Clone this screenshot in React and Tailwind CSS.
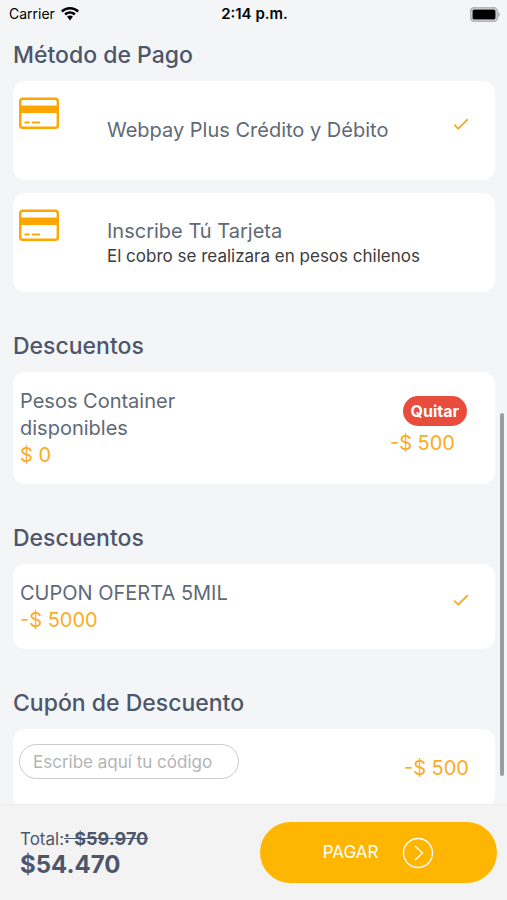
import { useState } from "react";

const paymentMethods = [
  { id: "webpay", title: "Webpay Plus Crédito y Débito" },
  {
    id: "card",
    title: "Inscribe Tú Tarjeta",
    detail: "El cobro se realizara en pesos chilenos",
  },
];

const WifiIcon = () => (
  <svg viewBox="0 0 18 14" className="h-[14px] w-[18px]" fill="black">
    <path d="M9 0C5.500 0 2.400 1.300 0 3.600L1.700 5.400C3.700 3.600 6.200 2.500 9 2.500s5.300 1.100 7.300 2.900L18 3.600C15.600 1.300 12.500 0 9 0z" />
    <path d="M9 4.300c-2.200 0-4.200.9-5.700 2.300L5 8.400c1.100-1 2.500-1.600 4-1.600s2.900.6 4 1.600l1.700-1.800C13.200 5.200 11.200 4.300 9 4.300z" />
    <path d="M9 8.500c-1.100 0-2.100.4-2.900 1.100L9 13.500l2.900-3.900C11.100 8.900 10.100 8.500 9 8.500z" />
  </svg>
);

const BatteryIcon = () => (
  <svg viewBox="0 0 30 15" className="h-[15px] w-[30px]">
    <rect x="0.750" y="0.750" width="26.500" height="13.500" rx="3.500" fill="none" stroke="#b4b5b7" strokeWidth="1.800" />
    <rect x="2.500" y="2.500" width="23" height="10" rx="1.500" fill="black" />
    <path d="M28.200 5v5c1-.3 1.700-1.300 1.700-2.500S29.200 5.300 28.200 5z" fill="#b4b5b7" />
  </svg>
);

const CardIcon = () => (
  <svg viewBox="0 0 40 32" className="h-8 w-10">
    <rect x="1.200" y="1.700" width="37.600" height="29" rx="2.500" fill="none" stroke="#ffa500" strokeWidth="2.400" />
    <rect x="1" y="8.500" width="38" height="7.500" fill="#ffa500" />
    <path d="M5.500 25.500h5M13 25.500h8" stroke="#ffa500" strokeWidth="2.200" />
  </svg>
);

const CheckIcon = () => (
  <svg viewBox="0 0 16 12" className="mb-3.5 h-3 w-4 shrink-0" fill="none">
    <path d="M1.200 6.600l4 4L14.800 1.200" stroke="#fbac1f" strokeWidth="1.900" />
  </svg>
);

const ArrowIcon = () => (
  <svg viewBox="0 0 32 32" className="h-8 w-8" fill="none" stroke="white" strokeWidth="1.300">
    <circle cx="16" cy="16" r="14.500" />
    <path d="M13 9l7.500 7L13 23" />
  </svg>
);

const Heading = ({ children }) => (
  <h2 className="mb-[10px] text-[23px] leading-8 font-medium">{children}</h2>
);

const App = () => {
  const [method, setMethod] = useState("webpay");
  const [code, setCode] = useState("");

  return (
    <div className="flex h-screen flex-col overflow-hidden bg-[#f3f5f7] font-[Inter,sans-serif] text-[#4e566b]">
      <header className="grid h-7 shrink-0 grid-cols-3 items-center pr-[7px] pl-[9px] text-sm text-black">
        <div className="flex items-center gap-[6px]">
          <span>Carrier</span>
          <WifiIcon />
        </div>
        <span className="text-center text-[15px] font-semibold">2:14 p.m.</span>
        <div className="flex justify-end">
          <BatteryIcon />
        </div>
      </header>

      <div className="relative flex min-h-0 flex-1 flex-col">
        <main className="flex flex-1 flex-col gap-[38px] overflow-y-auto pt-[11px] pr-3 pb-6 pl-[13px] [scrollbar-width:none]">
          <section>
            <Heading>Método de Pago</Heading>
            <div className="flex flex-col gap-[13px]">
              {paymentMethods.map((item) => (
                <label
                  key={item.id}
                  className="relative flex min-h-[99px] cursor-pointer items-center rounded-xl bg-white pr-[26px] pl-[6px]"
                >
                  <input
                    type="radio"
                    name="method"
                    value={item.id}
                    checked={method === item.id}
                    onChange={() => setMethod(item.id)}
                    className="sr-only"
                  />
                  <span className="mr-12 self-start pt-4">
                    <CardIcon />
                  </span>
                  <span className="flex flex-1 flex-col">
                    <span className="text-xl leading-[27px] text-[#606975]">{item.title}</span>
                    {item.detail && (
                      <span className="text-[17px] leading-[22px] text-[#3c3c3c]">{item.detail}</span>
                    )}
                  </span>
                  {method === item.id && <CheckIcon />}
                </label>
              ))}
            </div>
          </section>

          <section>
            <Heading>Descuentos</Heading>
            <div className="flex items-center justify-between rounded-xl bg-white pt-4 pr-7 pb-[15px] pl-[7px] text-xl leading-[27px] text-[#606975]">
              <div className="w-48">
                <p>Pesos Container disponibles</p>
                <p className="text-[#fbac1f]">$ 0</p>
              </div>
              <div className="mb-1 flex flex-col items-end gap-1">
                <button
                  type="button"
                  className="h-[30px] cursor-pointer rounded-full bg-[#e74c3c] px-2 text-base leading-6 font-bold text-white"
                >
                  Quitar
                </button>
                <p className="pr-3 text-[#fbac1f]">-$ 500</p>
              </div>
            </div>
          </section>

          <section>
            <Heading>Descuentos</Heading>
            <div className="flex items-center justify-between rounded-xl bg-white pt-4 pr-[26px] pb-[15px] pl-[7px] text-xl leading-[27px] text-[#606975]">
              <div>
                <p>CUPON OFERTA 5MIL</p>
                <p className="text-[#fbac1f]">-$ 5000</p>
              </div>
              <CheckIcon />
            </div>
          </section>

          <section>
            <Heading>Cupón de Descuento</Heading>
            <div className="flex min-h-[79px] items-center justify-between rounded-xl bg-white pr-[26px] pl-[6px]">
              <input
                type="text"
                aria-label="Código de descuento"
                value={code}
                onChange={(event) => setCode(event.target.value)}
                placeholder="Escribe aquí tu código"
                className="mb-3.5 h-[35px] w-[220px] rounded-full border border-[#cbcbcd] px-[13px] text-[17px] outline-none placeholder:text-[#b3b4b6]"
              />
              <p className="text-xl leading-[27px] text-[#fbac1f]">-$ 500</p>
            </div>
          </section>
        </main>
        {/* scroll indicator */}
        <div className="absolute right-[3px] bottom-7 h-[363px] w-1 rounded-full bg-[#9c9da0]" />
      </div>

      <footer className="flex h-24 shrink-0 items-center justify-between border-t border-[#ececec] bg-[#f4f3f4] pr-[10px] pl-5">
        <div>
          <p className="text-[17px] leading-6">
            Total:<s className="text-lg leading-6 font-bold">: $59.970</s>
          </p>
          <p className="text-2xl leading-7 font-bold">$54.470</p>
        </div>
        <button
          type="button"
          className="flex h-[61px] w-[237px] cursor-pointer items-center justify-center gap-6 rounded-full bg-[#ffb602] text-[17px] text-white"
        >
          PAGAR
          <ArrowIcon />
        </button>
      </footer>
    </div>
  );
};

export default App;
